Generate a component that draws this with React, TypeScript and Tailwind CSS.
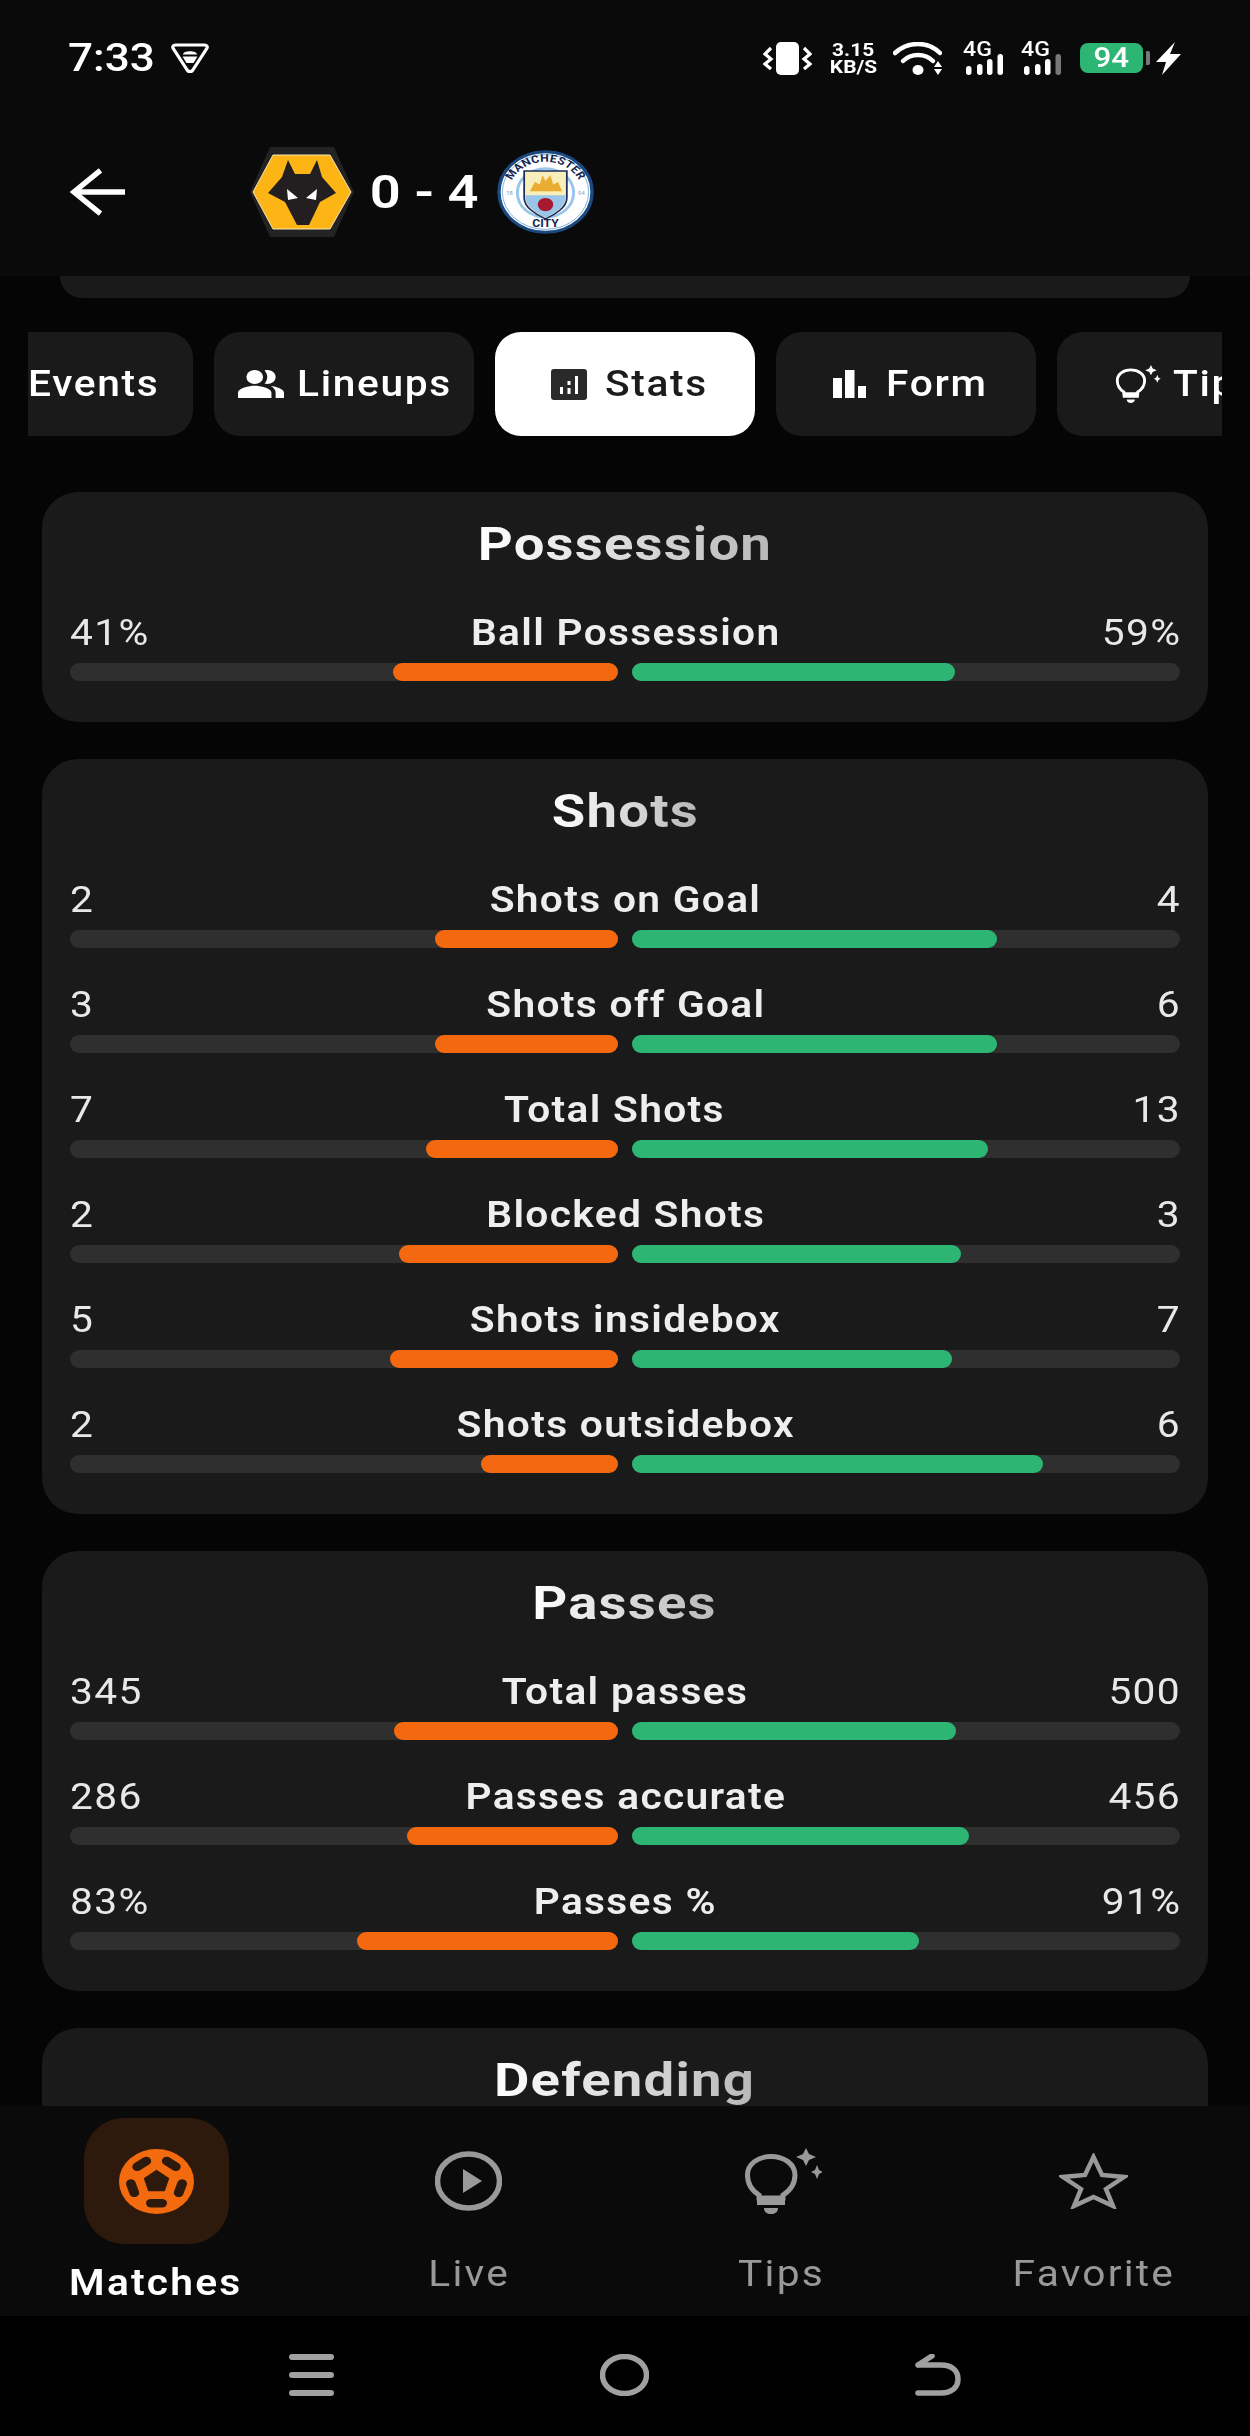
import React from 'react'

type Stat = { label: string; home: string; away: string; homeValue: number; awayValue: number }

const possession: Stat[] = [{ label: 'Ball Possession', home: '41%', away: '59%', homeValue: 41, awayValue: 59 }]

const shots: Stat[] = [
    { label: 'Shots on Goal', home: '2', away: '4', homeValue: 2, awayValue: 4 },
    { label: 'Shots off Goal', home: '3', away: '6', homeValue: 3, awayValue: 6 },
    { label: 'Total Shots', home: '7', away: '13', homeValue: 7, awayValue: 13 },
    { label: 'Blocked Shots', home: '2', away: '3', homeValue: 2, awayValue: 3 },
    { label: 'Shots insidebox', home: '5', away: '7', homeValue: 5, awayValue: 7 },
    { label: 'Shots outsidebox', home: '2', away: '6', homeValue: 2, awayValue: 6 },
]

const passes: Stat[] = [
    { label: 'Total passes', home: '345', away: '500', homeValue: 345, awayValue: 500 },
    { label: 'Passes accurate', home: '286', away: '456', homeValue: 286, awayValue: 456 },
    { label: 'Passes %', home: '83%', away: '91%', homeValue: 83, awayValue: 91 },
]

const Bulb = ({ className }: { className: string }) => (
    <svg viewBox="0 0 77 66" className={className} fill="none">
        <path d="M14 50V47C6 42 2.5 35 2.5 27 2.5 16 13 8.500 26 8.500S50 16 50 27C50 35 46 42 38 47V50Z" stroke="currentColor" strokeWidth="5" />
        <path d="M12 51H40V57H12Z M19 60H33C33 64 30 66 26 66S19 64 19 60Z" fill="currentColor" />
        <path d="M61 0L64 6 71 9 64 12 61 18 58 12 51 9 58 6Z M72 17L74 22 78 24 74 26 72 31 70 26 66 24 70 22Z" fill="currentColor" />
    </svg>
)

const WolvesCrest = () => (
    <svg viewBox="0 0 104 90" className="h-[90px] w-[104px] shrink-0">
        <path d="M20 0H84L104 45 84 90H20L0 45Z" fill="#232323" />
        <path d="M23 8H80L101 45 80 82H23L3 45Z" fill="#fdb515" stroke="#f7e7b4" strokeWidth="1" />
        <path d="M38 13L45 27H60L67 13 72 30 86 46 70 55 59 78H47L35 55 18 46 32 30Z" fill="#231f20" />
        <path d="M37 42L48 51 38 53Z M67 42L66 53 56 51Z" fill="#fff" />
    </svg>
)

const CityCrest = () => (
    <svg viewBox="0 0 100 100" preserveAspectRatio="none" className="h-[84px] w-[97px] shrink-0">
        <defs>
            <path id="cityArc" d="M12 52A38 38 0 0 1 88 52" />
        </defs>
        <circle cx="50" cy="50" r="48" fill="#fff" stroke="#1b4a80" strokeWidth="3.500" />
        <circle cx="50" cy="50" r="44.500" fill="none" stroke="#6fa8d8" strokeWidth="1" />
        <circle cx="50" cy="51" r="29" fill="#fff" stroke="#98c5e9" strokeWidth="3" />
        <text fontFamily="Roboto, sans-serif" fontSize="12.500" fontWeight="700" fill="#16264f" letterSpacing="0.400">
            <textPath href="#cityArc" startOffset="50%" textAnchor="middle">MANCHESTER</textPath>
        </text>
        <text x="50" y="92" fontFamily="Roboto, sans-serif" fontSize="12.500" fontWeight="700" fill="#16264f" textAnchor="middle">CITY</text>
        <text x="13" y="54" fontFamily="Roboto, sans-serif" fontSize="6" fill="#8a9aaa" textAnchor="middle">18</text>
        <text x="87" y="54" fontFamily="Roboto, sans-serif" fontSize="6" fill="#8a9aaa" textAnchor="middle">94</text>
        <path d="M28 25H72V57C72 68 60 77 50 82 40 77 28 68 28 57Z" fill="#f7eeb9" stroke="#1c2c5b" strokeWidth="1.800" />
        <path d="M29.500 54H70.500V57C70.500 67 59 75 50 80.500 41 75 29.500 67 29.500 57Z" fill="#98c5e9" />
        <path d="M34 49L39 38 44 41 47 30 50 37 55 30 58 41 63 38 67 49Z" fill="#e8ad32" />
        <circle cx="50" cy="65" r="8" fill="#a6192e" />
    </svg>
)

const SignalBars = ({ className, lastColor }: { className: string; lastColor: string }) => (
    <div className={`flex w-[40px] flex-col ${className}`}>
        <span className="inline-block origin-left scale-x-[1.1] text-[21px] font-medium leading-[15px]">4G</span>
        <svg viewBox="0 0 40 21" className="-mt-[3px] h-[21px] w-[40px]">
            <rect x="3" y="12" width="5.500" height="9" rx="2.700" fill="#fff" />
            <rect x="14" y="10" width="5.500" height="11" rx="2.700" fill="#fff" />
            <rect x="24" y="5" width="5.500" height="16" rx="2.700" fill="#fff" />
            <rect x="34.500" y="0" width="5.500" height="21" rx="2.700" fill={lastColor} />
        </svg>
    </div>
)

const StatusBar = () => (
    <div className="flex h-[116px] items-center pl-[68px] pr-[69px]">
        <span className="inline-block origin-left scale-x-[1.16] text-[38px] font-medium leading-none text-white">7:33</span>
        <svg viewBox="0 0 38 30" className="ml-[28px] h-[30px] w-[38px]" fill="none">
            <path d="M4.500 2H33.500C36 2 37 4 35.500 6L21.500 27.500C20 29 18 29 16.500 27.500L2.500 6C1 4 2 2 4.500 2Z" stroke="#fff" strokeWidth="3.200" />
            <path d="M12 11.500C12 7 26 7 26 11.500Z M11.500 13.500H26.500L22.500 20H15.500Z" fill="#fff" />
        </svg>
        <div className="ml-auto flex items-center text-white">
            <svg viewBox="0 0 49 33" className="h-[33px] w-[49px]" fill="none">
                <rect x="13" y="0" width="23" height="33" rx="5" fill="#fff" />
                <path d="M8 6L2 12 8 17 2 22 8 27 M41 6L47 12 41 17 47 22 41 27" stroke="#fff" strokeWidth="3.200" />
            </svg>
            <div className="ml-[18px] flex w-[46px] flex-col items-center font-bold">
                <span className="inline-block scale-x-[1.1] text-[19px] leading-[17px]">3.15</span>
                <span className="inline-block scale-x-[1.1] text-[19px] leading-[17px]">KB/S</span>
            </div>
            <svg viewBox="0 0 49 33" className="ml-[17px] h-[33px] w-[49px]" fill="none">
                <path d="M2 11C15 -1 35 -1 47 11" stroke="#fff" strokeWidth="4.500" strokeLinecap="round" />
                <path d="M10 19C18 11 32 11 40 19" stroke="#fff" strokeWidth="4.500" strokeLinecap="round" />
                <ellipse cx="25" cy="28" rx="5.500" ry="5" fill="#fff" />
                <path d="M41 25L45 19 49 25Z M41 27H49L45 33Z" fill="#fff" />
            </svg>
            <SignalBars className="ml-[21px]" lastColor="#ffffff" />
            <SignalBars className="ml-[18px]" lastColor="#777777" />
            <div className="ml-[19px] flex items-center">
                <div className="flex h-[30px] w-[63px] items-center justify-center rounded-[8px] bg-[#2db673]">
                    <span className="inline-block scale-x-[1.16] text-[27px] font-medium leading-none text-white">94</span>
                </div>
                <div className="ml-[3px] h-[14px] w-[4px] rounded-r-[2px] bg-[#777]" />
            </div>
            <svg viewBox="0 0 25 33" className="ml-[6px] h-[33px] w-[25px]">
                <path d="M19 0L0 20H10L6 33 25 12H14Z" fill="#fff" />
            </svg>
        </div>
    </div>
)

const Header = () => (
    <header className="h-[276px] shrink-0 bg-[#0a0a0a]">
        <StatusBar />
        <div className="flex h-[152px] items-center pl-[70px]">
            <svg viewBox="0 0 56 48" className="mr-[125px] h-[48px] w-[55px]" fill="none">
                <path d="M56 24H4 M31 2L4 24 31 46" stroke="#fff" strokeWidth="5.500" />
            </svg>
            <WolvesCrest />
            <div className="ml-[16px] mr-[19px] flex w-[108px] justify-center">
                <span className="inline-block scale-x-[1.18] whitespace-pre text-[46px] font-semibold leading-none text-white">0 - 4</span>
            </div>
            <CityCrest />
        </div>
    </header>
)

const Tabs = () => (
    <div className="ml-[28px] mt-[34px] w-[1194px] overflow-hidden">
        <div className="-ml-[95px] flex w-max gap-[21px]">
            <div className="flex h-[104px] w-[260px] items-center justify-center gap-[14px] rounded-[26px] bg-[#1a1a1a] text-white">
                <div className="h-[45px] w-[45px]" />
                <span className="w-[129px]"><span className="inline-block origin-left scale-x-[1.1] text-[37px] font-medium tracking-[1.500px]">Events</span></span>
            </div>
            <div className="flex h-[104px] w-[260px] items-center justify-center gap-[14px] rounded-[26px] bg-[#1a1a1a] text-white">
                <svg viewBox="1 4 22 16" preserveAspectRatio="none" className="h-[28px] w-[46px]">
                    <path fill="currentColor" d="M16.670 13.130C18.040 14.060 19 15.320 19 17v3h4v-3c0-2.180-3.570-3.470-6.330-3.870z M9 12a4 4 0 100-8 4 4 0 000 8z M15 12c2.210 0 4-1.790 4-4s-1.790-4-4-4c-.47 0-.91.1-1.330.24C14.500 5.270 15 6.580 15 8s-.5 2.730-1.330 3.760c.42.14.86.24 1.330.24z M9 13c-2.670 0-8 1.340-8 4v3h16v-3c0-2.660-5.330-4-8-4z" />
                </svg>
                <span className="w-[153px]"><span className="-ml-[1px] inline-block origin-left scale-x-[1.1] text-[37px] font-medium tracking-[1.500px]">Lineups</span></span>
            </div>
            <div className="flex h-[104px] w-[260px] items-center justify-center gap-[18px] rounded-[26px] bg-white pl-[6px] text-[#1c1c1c]">
                <svg viewBox="0 0 36 31" className="h-[31px] w-[36px]">
                    <rect width="36" height="31" rx="3" fill="#2a2a2a" />
                    <path d="M9 18H12V25H9Z M16.500 12H19.500V16H16.500Z M16.500 19H19.500V25H16.500Z M24 7H27V25H24Z" fill="#fff" />
                </svg>
                <span className="w-[101px]"><span className="inline-block origin-left scale-x-[1.1] text-[37px] font-medium tracking-[1.500px]">Stats</span></span>
            </div>
            <div className="flex h-[104px] w-[260px] items-center justify-center gap-[20px] rounded-[26px] bg-[#1a1a1a] pl-[6px] text-white">
                <svg viewBox="0 0 33 28" className="h-[28px] w-[33px]">
                    <path d="M0 8H9V28H0Z M12 0H21.500V28H12Z M25 16H33V28H25Z" fill="#fff" />
                </svg>
                <span className="w-[100px]"><span className="inline-block origin-left scale-x-[1.1] text-[37px] font-medium tracking-[1.500px]">Form</span></span>
            </div>
            <div className="flex h-[104px] w-[260px] items-center justify-center gap-[12px] rounded-[26px] bg-[#1a1a1a] text-white">
                <Bulb className="h-[38px] w-[46px]" />
                <span className="w-[86px]"><span className="inline-block origin-left scale-x-[1.1] text-[37px] font-medium tracking-[1.500px]">Tips</span></span>
            </div>
        </div>
    </div>
)

const StatRow = ({ stat }: { stat: Stat }) => {
    const total = stat.homeValue + stat.awayValue
    const homePct = (stat.homeValue / total) * 100
    const awayPct = (stat.awayValue / total) * 100
    return (
        <div>
            <div className="flex h-[44px] items-center justify-between pt-[3px] text-[37px] leading-none tracking-[1.200px]">
                <span className="inline-block origin-left scale-x-[1.1] text-[#e8e8e8]">{stat.home}</span>
                <span className="inline-block scale-x-[1.1] font-semibold text-[#eeeeee]">{stat.label}</span>
                <span className="-mr-[1px] inline-block origin-right scale-x-[1.1] text-[#e8e8e8]">{stat.away}</span>
            </div>
            <div className="mt-[10px] flex gap-[14px]">
                <div className="flex h-[18px] flex-1 justify-end rounded-full bg-[#2f2f2f]">
                    <div className="h-full rounded-full bg-[#f4690f]" style={{ width: `${homePct}%` }} />
                </div>
                <div className="h-[18px] flex-1 rounded-full bg-[#2f2f2f]">
                    <div className="h-full rounded-full bg-[#2db673]" style={{ width: `${awayPct}%` }} />
                </div>
            </div>
        </div>
    )
}

const StatCard = ({ title, rows }: { title: string; rows: Stat[] }) => (
    <section className="rounded-[36px] bg-[#1a1a1a] px-[28px] pb-[41px] pt-[28px]">
        <h2 className="mb-[43px] flex h-[46px] items-center justify-center pt-[2px]">
            <span className="inline-block scale-x-[1.16] bg-linear-to-r from-white to-[#b8b8b8] bg-clip-text text-[47px] font-bold leading-[58px] tracking-[1px] text-transparent">{title}</span>
        </h2>
        <div className="flex flex-col gap-[33px]">
            {rows.map((row) => (
                <StatRow key={row.label} stat={row} />
            ))}
        </div>
    </section>
)

const BottomNav = () => (
    <nav className="grid h-[210px] shrink-0 grid-cols-4 bg-[#0a0a0a] pt-[12px]">
        <div className="flex flex-col items-center">
            <div className="flex h-[126px] w-[145px] items-center justify-center rounded-[40px] bg-[#2e1a0c]">
                <svg viewBox="0 0 100 100" preserveAspectRatio="none" className="h-[65px] w-[75px]">
                    <circle cx="50" cy="50" r="50" fill="#f46a0e" />
                    <path d="M50 32L67 45 61 65H39L33 45Z" fill="#2e1a0c" />
                    <rect x="36" y="77" width="28" height="13" rx="6.500" fill="#2e1a0c" />
                    <rect x="36" y="77" width="28" height="13" rx="6.500" fill="#2e1a0c" transform="rotate(72 50 50)" />
                    <rect x="36" y="77" width="28" height="13" rx="6.500" fill="#2e1a0c" transform="rotate(144 50 50)" />
                    <rect x="36" y="77" width="28" height="13" rx="6.500" fill="#2e1a0c" transform="rotate(216 50 50)" />
                    <rect x="36" y="77" width="28" height="13" rx="6.500" fill="#2e1a0c" transform="rotate(288 50 50)" />
                </svg>
            </div>
            <span className="mt-[17px] inline-block scale-x-[1.1] text-[37px] font-semibold leading-[44px] tracking-[2px] text-white">Matches</span>
        </div>
        <div className="flex flex-col items-center text-[#999999]">
            <div className="flex h-[126px] items-center justify-center">
                <svg viewBox="0 0 67 60" className="h-[60px] w-[67px]" fill="none">
                    <ellipse cx="33.500" cy="30" rx="31" ry="27" stroke="currentColor" strokeWidth="5.500" />
                    <path d="M28 18L47 30 28 42Z" fill="currentColor" />
                </svg>
            </div>
            <span className="mt-[8px] inline-block scale-x-[1.1] text-[37px] leading-[44px] tracking-[2px]">Live</span>
        </div>
        <div className="flex flex-col items-center text-[#999999]">
            <div className="flex h-[126px] items-center justify-center">
                <Bulb className="ml-[5px] h-[66px] w-[77px]" />
            </div>
            <span className="mt-[8px] inline-block scale-x-[1.1] text-[37px] leading-[44px] tracking-[2px]">Tips</span>
        </div>
        <div className="flex flex-col items-center text-[#999999]">
            <div className="flex h-[126px] items-center justify-center">
                <svg viewBox="0 0 69 56" className="h-[56px] w-[69px]" fill="none">
                    <path d="M34.500 4L43 22 65 24 47 36 54 53 34.500 44 15 53 22 36 4 24 26 22Z" stroke="currentColor" strokeWidth="4.500" />
                </svg>
            </div>
            <span className="mt-[8px] inline-block scale-x-[1.1] text-[37px] leading-[44px] tracking-[2px]">Favorite</span>
        </div>
    </nav>
)

const SystemNav = () => (
    <div className="flex h-[120px] shrink-0 items-center justify-center gap-[266px] bg-black pb-[2px]">
        <div className="flex w-[45px] flex-col gap-[12px]">
            <div className="h-[6px] rounded-full bg-[#a0a0a0]" />
            <div className="h-[6px] rounded-full bg-[#a0a0a0]" />
            <div className="h-[6px] rounded-full bg-[#a0a0a0]" />
        </div>
        <svg viewBox="0 0 49 42" className="h-[42px] w-[49px]" fill="none">
            <ellipse cx="24.500" cy="21" rx="22" ry="18.500" stroke="#a0a0a0" strokeWidth="5.500" />
        </svg>
        <svg viewBox="0 0 46 42" className="h-[42px] w-[46px]" fill="none">
            <path d="M3 39H26C36 39 43 34 43 25S36 11 26 11H3 M3 11L17 2" stroke="#a0a0a0" strokeWidth="5.500" strokeLinecap="round" />
        </svg>
    </div>
)

const App = () => {
    return (
        <div className="flex h-[2436px] w-[1250px] flex-col overflow-hidden bg-[#050505] font-['Roboto',sans-serif]">
            <Header />
            <main className="min-h-0 flex-1 overflow-hidden">
                <div className="mx-[60px] h-[22px] rounded-b-[30px] bg-[#1a1a1a]" />
                <Tabs />
                <div className="mx-[42px] mt-[56px] flex flex-col gap-[37px]">
                    <StatCard title="Possession" rows={possession} />
                    <StatCard title="Shots" rows={shots} />
                    <StatCard title="Passes" rows={passes} />
                    <StatCard title="Defending" rows={[]} />
                </div>
            </main>
            <BottomNav />
            <SystemNav />
        </div>
    )
}

export default App
